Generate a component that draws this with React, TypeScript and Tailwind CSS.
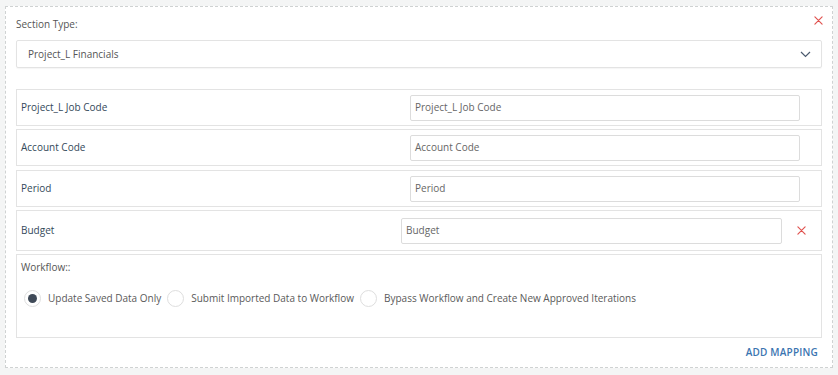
import React from "react";

const font = { fontFamily: '"Open Sans", "Noto Sans", "Liberation Sans", sans-serif' };

function XIcon({ size = 10 }: { size?: number }) {
  return (
    <svg width={size} height={size} viewBox="0 0 10 10" fill="none">
      <path d="M1 1L9 9M9 1L1 9" stroke="#e0524f" strokeWidth="1.3" strokeLinecap="round" />
    </svg>
  );
}

function Row({ label, last, className = "" }: { label: string; last?: boolean; className?: string }) {
  return (
    <div
      className={`flex items-center border border-[#e3e3e3] pl-[4px] ${last ? "h-[41px]" : "h-[37px]"} ${className}`}
    >
      <div className="flex-1 text-[10px] text-[#34495a]">{label}</div>
      {last ? (
        <>
          <div className="w-[381px] h-[26px] border border-[#dcdcdc] rounded-[2px] flex items-center px-[4px] text-[10px] text-[#666]">
            {label}
          </div>
          <div className="w-[39px] flex justify-center">
            <XIcon size={9} />
          </div>
        </>
      ) : (
        <>
          <div className="w-[390px] h-[26px] border border-[#dcdcdc] rounded-[2px] flex items-center px-[4px] text-[10px] text-[#666]">
            {label}
          </div>
          <div className="w-[21px]" />
        </>
      )}
    </div>
  );
}

function Radio({ checked, label }: { checked?: boolean; label: string }) {
  return (
    <div className="flex items-center">
      <div className="w-[17px] h-[17px] rounded-full border border-[#dedede] bg-white flex items-center justify-center mr-[7px]">
        {checked && <div className="w-[9px] h-[9px] rounded-full bg-[#3f4a58]" />}
      </div>
      <span className="text-[10px] text-[#5a5a5a] mr-[6px]">{label}</span>
    </div>
  );
}

export default function App() {
  return (
    <div className="w-[838px] h-[375px] bg-[#f4f5f5] pt-[6px] pl-[5px]" style={font}>
      <div className="relative w-[828px] h-[362px] bg-white border border-dashed border-[#cfd2d2] px-[10px]">
        <div className="absolute right-[9px] top-[9px]">
          <XIcon size={9} />
        </div>
        <div className="pt-[10px] h-[33px] text-[10px] text-[#555]">Section Type:</div>
        <div className="h-[28px] border border-[#e3e3e3] rounded-[2px] flex items-center justify-between pl-[11px] pr-[10px] shadow-[0_1px_1px_rgba(0,0,0,0.04)]">
          <span className="text-[10px] text-[#555]">Project_L Financials</span>
          <svg width="11" height="7" viewBox="0 0 11 7" fill="none">
            <path d="M1 1L5.5 5.5L10 1" stroke="#4a5a6e" strokeWidth="1.2" />
          </svg>
        </div>
        <div className="mt-[21px] flex flex-col">
          <Row label="Project_L Job Code" />
          <Row label="Account Code" className="mt-[3px]" />
          <Row label="Period" className="mt-[4px]" />
          <Row label="Budget" last className="mt-[3px]" />
          <div className="mt-[3px] h-[84px] border border-[#e3e3e3] pl-[4px] pt-[5px]">
            <div className="text-[10px] text-[#555]">Workflow::</div>
            <div className="flex items-center mt-[15px] pl-[3px]">
              <Radio checked label="Update Saved Data Only" />
              <Radio label="Submit Imported Data to Workflow" />
              <Radio label="Bypass Workflow and Create New Approved Iterations" />
            </div>
          </div>
        </div>
        <div className="flex justify-end pr-[4px] mt-[7px]">
          <span className="text-[10px] font-semibold text-[#3a74b0] tracking-[0.2px]">ADD MAPPING</span>
        </div>
      </div>
    </div>
  );
}
